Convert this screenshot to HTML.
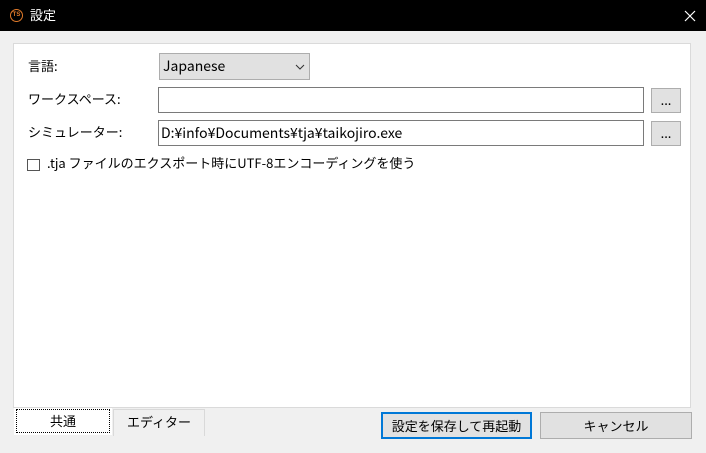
<!DOCTYPE html>
<html><head><meta charset="utf-8"><style>
*{box-sizing:border-box;margin:0;padding:0}
body{width:706px;height:453px;background:#f0f0f0;font-family:"Noto Sans CJK JP",sans-serif;font-size:13px;color:#000;position:relative;overflow:hidden}
.a{position:absolute}
.title{left:0;top:0;width:706px;height:31px;background:#000;color:#fff}
.panel{left:13px;top:43px;width:678px;height:365px;background:#fff;border:1px solid #dadada}
.lbl{left:28px;line-height:16px}
.tb{background:#fff;border:1px solid #7a7a7a;height:26px;padding-left:2px;line-height:24px;font-size:14px}
.btn{background:#e1e1e1;border:1px solid #adadad;text-align:center}
</style></head><body>
<div class="a title">
 <div class="a" style="left:10px;top:9px;width:13px;height:13px;border-radius:50%;border:1.5px solid #e07a2a;color:#e07a2a;font-size:6px;line-height:10px;text-align:center;font-weight:bold;font-family:'Liberation Sans',sans-serif">TS</div>
 <div class="a" style="left:30px;top:6px;font-size:13px;line-height:18px">設定</div>
 <svg class="a" style="left:684px;top:10px" width="12" height="12"><path d="M1 1L11 11M11 1L1 11" stroke="#fff" stroke-width="1.2"/></svg>
</div>
<div class="a panel"></div>
<div class="a lbl" style="top:58px">言語:</div>
<div class="a btn" style="left:159px;top:53px;width:151px;height:27px;text-align:left;padding-left:3px;line-height:25px;font-size:14px">Japanese
 <svg class="a" style="left:135px;top:10px" width="10" height="7"><path d="M1 1L5 5L9 1" stroke="#333" fill="none"/></svg></div>
<div class="a lbl" style="top:91px">ワークスペース:</div>
<div class="a tb" style="left:158px;top:87px;width:486px"></div>
<div class="a btn" style="left:651px;top:88px;width:30px;height:25px;line-height:22px">...</div>
<div class="a lbl" style="top:124px">シミュレーター:</div>
<div class="a tb" style="left:158px;top:120px;width:486px">D:¥info¥Documents¥tja¥taikojiro.exe</div>
<div class="a btn" style="left:651px;top:121px;width:30px;height:25px;line-height:22px">...</div>
<div class="a" style="left:27px;top:159px;width:13px;height:12px;border:1px solid #555;background:#fff"></div>
<div class="a" style="left:47px;top:155px;line-height:16px">.tja ファイルのエクスポート時にUTF-8エンコーディングを使う</div>
<div class="a" style="left:113px;top:409px;width:92px;height:27px;border:1px solid #d9d9d9;border-bottom:none;background:#f0f0f0;text-align:center;line-height:24px">エディター</div>
<div class="a" style="left:14px;top:408px;width:98px;height:27px;background:#fff"></div>
<div class="a" style="left:16px;top:409px;width:94px;height:24px;border:1px dotted #000;text-align:center;line-height:22px;font-size:13px">共通</div>
<div class="a btn" style="left:381px;top:412px;width:151px;height:27px;border:2px solid #0078d7;line-height:23px;font-size:13px">設定を保存して再起動</div>
<div class="a btn" style="left:540px;top:412px;width:152px;height:27px;line-height:25px;font-size:13px">キャンセル</div>
</body></html>
